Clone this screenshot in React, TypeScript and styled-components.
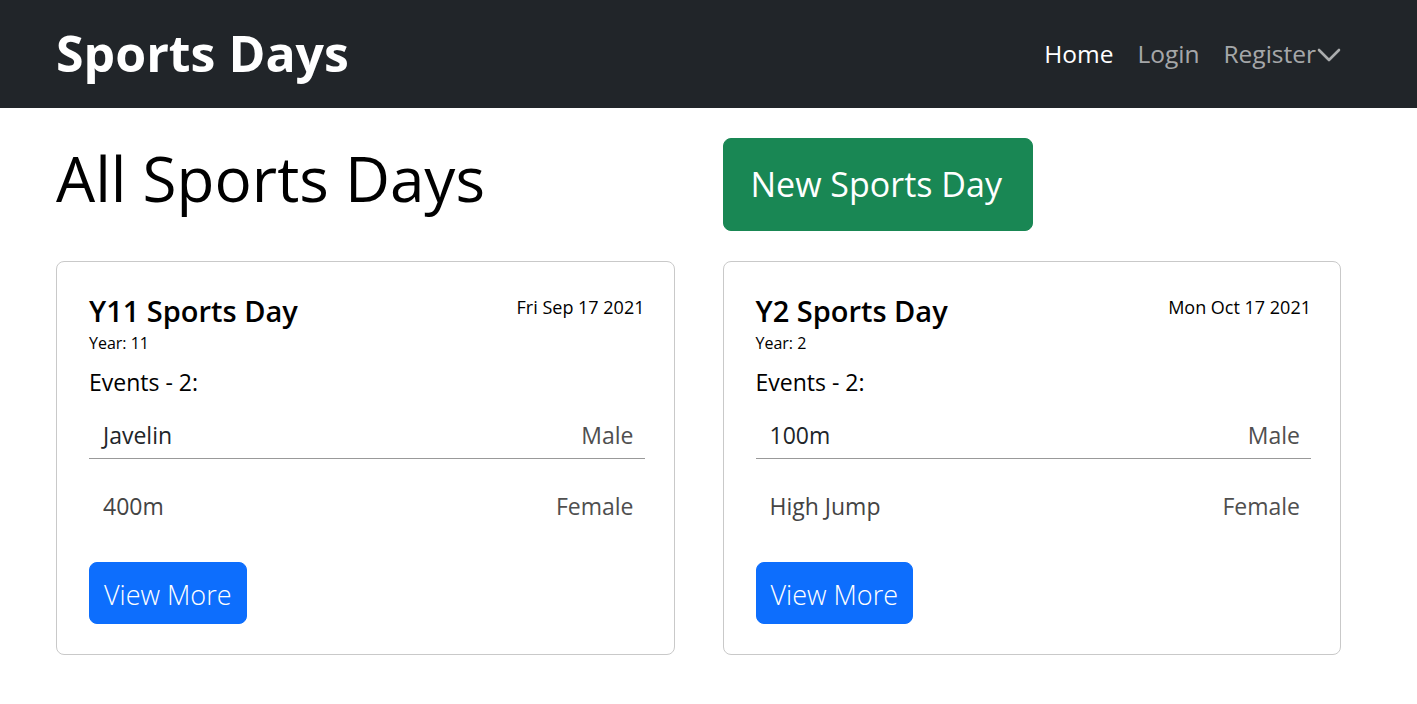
import React from 'react';
import styled, { createGlobalStyle } from 'styled-components';

const GlobalStyle = createGlobalStyle`
  * { box-sizing: border-box; }
  body {
    margin: 0;
    font-family: "Open Sans", "Noto Sans", sans-serif;
    color: #000;
    background: #fff;
  }
`;

type SportEvent = { name: string; gender: string };
type SportsDay = { title: string; year: number; date: string; events: SportEvent[] };

const days: SportsDay[] = [
  {
    title: 'Y11 Sports Day',
    year: 11,
    date: 'Fri Sep 17 2021',
    events: [
      { name: 'Javelin', gender: 'Male' },
      { name: '400m', gender: 'Female' },
    ],
  },
  {
    title: 'Y2 Sports Day',
    year: 2,
    date: 'Mon Oct 17 2021',
    events: [
      { name: '100m', gender: 'Male' },
      { name: 'High Jump', gender: 'Female' },
    ],
  },
];

const Chevron = () => (
  <svg width="24" height="14" viewBox="0 0 24 14" fill="none">
    <path d="M2 2l10 10L22 2" stroke="currentColor" strokeWidth="2.6" strokeLinecap="round" strokeLinejoin="round" />
  </svg>
);

const EventList = ({ events }: { events: SportEvent[] }) => (
  <List>
    {events.map((ev, i) => (
      <EventRow key={ev.name} $first={i === 0}>
        <EventName $first={i === 0}>{ev.name}</EventName>
        <EventGender>{ev.gender}</EventGender>
      </EventRow>
    ))}
  </List>
);

const DayCard = ({ day }: { day: SportsDay }) => (
  <Card>
    <CardHead>
      <CardTitle>{day.title}</CardTitle>
      <CardDate>{day.date}</CardDate>
    </CardHead>
    <Year>Year: {day.year}</Year>
    <EventsLabel>Events - {day.events.length}:</EventsLabel>
    <EventList events={day.events} />
    <ViewButton>View More</ViewButton>
  </Card>
);

const App = () => {
  return (
    <>
      <GlobalStyle />
      <NavBar>
        <Brand>Sports Days</Brand>
        <NavLinks>
          <NavLink $active>Home</NavLink>
          <NavLink>Login</NavLink>
          <NavLink>
            Register
            <Chevron />
          </NavLink>
        </NavLinks>
      </NavBar>
      <Main>
        <Grid>
          <PageTitle>All Sports Days</PageTitle>
          <div>
            <NewButton>New Sports Day</NewButton>
          </div>
          {days.map((d) => (
            <DayCard key={d.title} day={d} />
          ))}
        </Grid>
      </Main>
    </>
  );
};

const NavBar = styled.nav`
  height: 108px;
  background: #212529;
  display: flex;
  align-items: center;
  justify-content: space-between;
  padding: 0 76px 0 56px;
`;

const Brand = styled.div`
  color: #fff;
  font-weight: 700;
  font-size: 50px;
  line-height: 1;
  margin-top: -2px;
`;

const NavLinks = styled.div`
  display: flex;
  align-items: center;
  gap: 24px;
`;

const NavLink = styled.a<{ $active?: boolean }>`
  display: flex;
  align-items: center;
  gap: 1px;
  font-size: 24.5px;
  margin-top: -2px;
  color: ${(p) => (p.$active ? '#fff' : 'rgba(255,255,255,0.62)')};
  cursor: pointer;
  svg { margin-top: 3px; }
`;

const Main = styled.main`
  padding: 30px 76px 40px 56px;
`;

const Grid = styled.div`
  display: grid;
  grid-template-columns: 1fr 1fr;
  column-gap: 48px;
  row-gap: 30px;
`;

const PageTitle = styled.h1`
  margin: 3px 0 0;
  font-size: 62px;
  font-weight: 400;
  line-height: 1.2;
`;

const NewButton = styled.button`
  font-family: inherit;
  font-size: 34px;
  line-height: 1.5;
  padding: 20px 30px 20px 27px;
  color: #fff;
  background: #198754;
  border: 1px solid #198754;
  border-radius: 8px;
  cursor: pointer;
`;

const Card = styled.div`
  border: 1px solid #c9c9c9;
  border-radius: 8px;
  padding: 32px 29px 30px 32px;
  display: flex;
  flex-direction: column;
  align-items: stretch;
`;

const CardHead = styled.div`
  display: flex;
  justify-content: space-between;
  align-items: flex-start;
`;

const CardTitle = styled.h2`
  margin: 0;
  font-size: 29px;
  font-weight: 600;
  line-height: 1.15;
`;

const CardDate = styled.div`
  font-size: 18px;
  line-height: 1.5;
`;

const Year = styled.div`
  font-size: 16px;
  line-height: 1.5;
  margin-top: 4px;
`;

const EventsLabel = styled.div`
  font-size: 23px;
  line-height: 1.5;
  margin-top: 10px;
`;

const List = styled.div`
  display: flex;
  flex-direction: column;
  gap: 14px;
  margin-top: 2.5px;
`;

const EventRow = styled.div<{ $first?: boolean }>`
  display: flex;
  justify-content: space-between;
  padding: 16px 11px 5px 14px;
  font-size: 23px;
  line-height: 1.5;
  border-bottom: 1px solid ${(p) => (p.$first ? '#999' : 'transparent')};
`;

const EventName = styled.span<{ $first?: boolean }>`
  color: ${(p) => (p.$first ? '#212529' : '#444')};
`;

const EventGender = styled.span`
  color: #4f4f4f;
`;

const ViewButton = styled.button`
  align-self: flex-start;
  margin-top: 33px;
  font-family: inherit;
  font-weight: 300;
  font-size: 27px;
  line-height: 1.5;
  padding: 12px 14px 7px;
  color: #fff;
  background: #0d6efd;
  border: 1px solid #0d6efd;
  border-radius: 8px;
  cursor: pointer;
`;

export default App;
